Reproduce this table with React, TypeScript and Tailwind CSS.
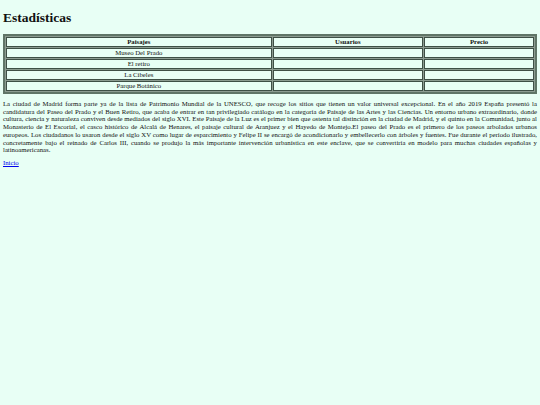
const rows = ['Museo Del Prado', 'El retiro', 'La Cibeles', 'Parque Botánico'];

const texto =
    'La ciudad de Madrid forma parte ya de la lista de Patrimonio Mundial de la UNESCO, que recoge los sitios que tienen un valor universal excepcional. En el año 2019 España presentó la candidatura del Paseo del Prado y el Buen Retiro, que acaba de entrar en tan privilegiado catálogo en la categoría de Paisaje de las Artes y las Ciencias. Un entorno urbano extraordinario, donde cultura, ciencia y naturaleza conviven desde mediados del siglo XVI. Este Paisaje de la Luz es el primer bien que ostenta tal distinción en la ciudad de Madrid, y el quinto en la Comunidad, junto al Monasterio de El Escorial, el casco histórico de Alcalá de Henares, el paisaje cultural de Aranjuez y el Hayedo de Montejo.El paseo del Prado es el primero de los paseos arbolados urbanos europeos. Los ciudadanos lo usaron desde el siglo XV como lugar de esparcimiento y Felipe II se encargó de acondicionarlo y embellecerlo con árboles y fuentes. Fue durante el período ilustrado, concretamente bajo el reinado de Carlos III, cuando se produjo la más importante intervención urbanística en este enclave, que se convertiría en modelo para muchas ciudades españolas y latinoamericanas.';

const cell = 'border border-[#3e5046] bg-[#e8fff5] p-0 text-center leading-[8px] h-[8.4px]';

export default function App() {
    return (
        <div className="min-h-[405px] bg-[#e8fff5] px-[3px] pt-[10px] pb-[9px] font-['Liberation_Serif',serif] text-[#111]">
            <h1 className="text-[13.5px] font-bold leading-[16px]">Estadísticas</h1>

            {/* Tabla */}
            <table className="mt-[8px] w-full border-separate border-spacing-[1px] border-2 border-[#5f7567] bg-[#8c9c91] text-[6.75px]">
                <thead>
                    <tr>
                        <th className={`${cell} w-[50.5%] font-bold`}>Paisajes</th>
                        <th className={`${cell} w-[28.6%] font-bold`}>Usuarios</th>
                        <th className={`${cell} font-bold`}>Precio</th>
                    </tr>
                </thead>
                <tbody>
                    {rows.map((r) => (
                        <tr key={r}>
                            <td className={cell}>{r}</td>
                            <td className={cell}></td>
                            <td className={cell}></td>
                        </tr>
                    ))}
                </tbody>
            </table>

            <p className="mt-[6px] text-justify text-[6.75px] leading-[7.7px]">{texto}</p>

            <p className="mt-[5px] text-[6.75px] leading-[7.7px]">
                <a href="#" className="text-[#0000ee] underline">Inicio</a>
            </p>
        </div>
    );
}
